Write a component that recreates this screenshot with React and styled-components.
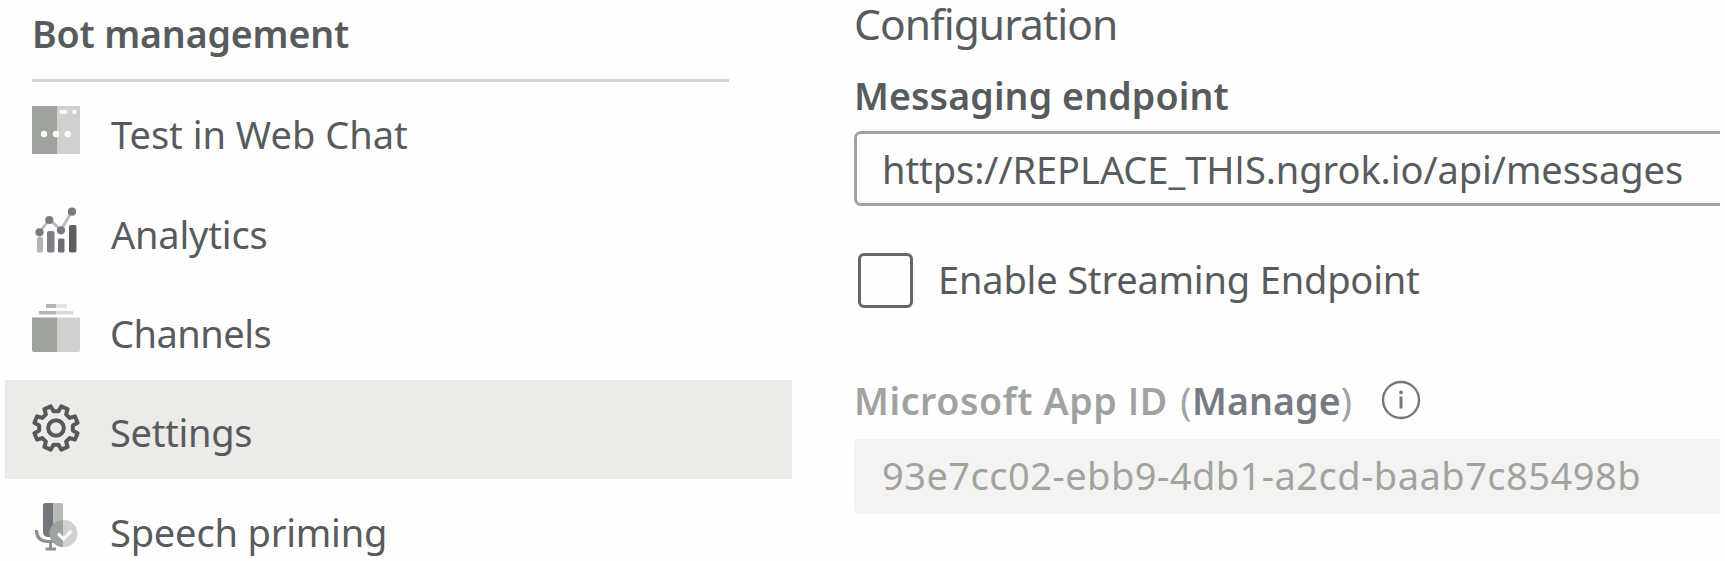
import React from 'react';
import styled, { createGlobalStyle } from 'styled-components';

const GlobalStyle = createGlobalStyle`
  * { box-sizing: border-box; }
  body {
    margin: 0;
    overflow: hidden;
    background: #fefefe;
    color: #575b5d;
    font-family: 'Noto Sans', 'Open Sans', sans-serif;
    font-size: 38px;
  }
`;

const Page = styled.div`
  display: flex;
  gap: 62px;
  width: 1725px;
  height: 561px;
  padding-left: 5px;
  overflow: hidden;
`;

const Sidebar = styled.nav`
  display: flex;
  flex-direction: column;
  flex: 0 0 787px;
`;

const GroupTitle = styled.h2`
  height: 82px;
  flex: none;
  margin: 0 63px 0 27px;
  padding-top: 6px;
  border-bottom: 3px solid #d2d3cf;
  font-size: 37.5px;
  font-weight: 600;
  line-height: 56px;
  letter-spacing: -0.15px;
`;

const NavList = styled.ul`
  margin: 0;
  padding: 0;
  list-style: none;
`;

const NavItem = styled.li`
  display: flex;
  align-items: center;
  height: 99.35px;
  padding-left: 27px;
  gap: 31px;
  background: ${(p) => (p.$selected ? '#ecebe8' : 'transparent')};
`;

const NavIcon = styled.svg`
  width: 48px;
  height: 48px;
  flex: none;
  margin-top: -4px;
`;

const NavLabel = styled.span`
  padding-top: 5px;
  line-height: 52px;
  letter-spacing: ${(p) => p.$tracking}px;
  margin-left: ${(p) => p.$shift || 0}px;
  white-space: nowrap;
`;

const Main = styled.main`
  display: flex;
  flex-direction: column;
  flex: 0 0 866px;
`;

const Heading = styled.h1`
  margin: 0;
  height: 48px;
  font-size: 42.5px;
  font-weight: 400;
  line-height: 48px;
  letter-spacing: -0.95px;
`;

const FieldLabel = styled.label`
  display: flex;
  align-items: center;
  height: ${(p) => p.$height}px;
  padding-top: ${(p) => p.$top}px;
  font-size: 37.5px;
  font-weight: 600;
  line-height: 52px;
  letter-spacing: ${(p) => p.$tracking}px;
  color: ${(p) => (p.$muted ? '#9fa39f' : 'inherit')};
  white-space: pre;
`;

const TextField = styled.div`
  display: flex;
  align-items: center;
  height: 75px;
  padding-left: 25px;
  border: 3px solid #a0a49e;
  border-right: 0;
  border-radius: 7px 0 0 7px;
  line-height: 52px;
  letter-spacing: -0.06px;
  white-space: nowrap;
`;

const DisabledField = styled(TextField)`
  padding: 0 0 4px 28px;
  border: 0;
  border-radius: 5px 0 0 5px;
  background: #f4f3f2;
  color: #a0a49f;
  letter-spacing: 0.48px;
`;

const CheckRow = styled.label`
  display: flex;
  align-items: center;
  gap: 25px;
  height: 55px;
  margin-top: 47px;
  padding-left: 4px;
  letter-spacing: -0.18px;
  white-space: nowrap;
`;

const CheckBox = styled.span`
  width: 55px;
  height: 55px;
  border: 3px solid #63676a;
  border-radius: 6px;
`;

const CheckLabel = styled.span`
  padding-bottom: 4px;
  line-height: 52px;
`;

const ManageLink = styled.a`
  color: #777a83;
  letter-spacing: 0.1px;
`;

const Paren = styled.span`
  font-weight: 400;
  margin-left: ${(p) => (p.$open ? 2 : 0)}px;
`;

/* The capital I without serif bars. */
const PlainI = styled.span`
  font-family: 'Open Sans', sans-serif;
`;

const InfoIcon = styled.svg`
  width: 40px;
  height: 40px;
  margin-left: 28px;
  margin-top: -2px;
`;

function gearPath(cx, cy, outer, root) {
  const pts = [];
  for (let i = 0; i < 8; i += 1) {
    const mid = 22.5 + i * 45;
    [[root, -14], [outer, -9], [outer, 9], [root, 14]].forEach(([r, d]) => {
      const a = ((mid + d) * Math.PI) / 180;
      pts.push(`${(cx + r * Math.sin(a)).toFixed(2)} ${(cy - r * Math.cos(a)).toFixed(2)}`);
    });
  }
  return `M${pts.join('L')}Z`;
}

const ChatIcon = () => (
  <NavIcon viewBox="0 0 48 48">
    <path d="M0 0h25v48H0z" fill="#9ea39d" />
    <path d="M25 0h23v48H25z" fill="#d0d1cf" />
    <rect x="27.5" y="4" width="8" height="4" rx="1.5" fill="#fafafa" />
    <rect x="40.5" y="4" width="4" height="4" rx="1" fill="#fafafa" />
    <g fill="#fdfdfd">
      <circle cx="12" cy="28" r="3.2" />
      <circle cx="24" cy="28" r="3.2" />
      <circle cx="35.7" cy="28" r="3.2" />
    </g>
  </NavIcon>
);

const AnalyticsIcon = () => (
  <NavIcon viewBox="0 0 48 48">
    <rect x="5" y="32" width="6" height="15.5" rx="1.5" fill="#b4b6b6" />
    <rect x="15" y="26" width="7.5" height="21.5" rx="2" fill="#7b7e86" />
    <rect x="26" y="33.5" width="6.5" height="14" rx="1.5" fill="#6b6e73" />
    <rect x="37" y="20" width="7.5" height="27.5" rx="2" fill="#5b5e61" />
    <path d="M7.5 27 17.5 14.5 29 25 40 6" fill="none" stroke="#b9bbbb" strokeWidth="2.8" />
    <g fill="#777a82">
      <circle cx="7.5" cy="27.3" r="4.1" />
      <circle cx="17.3" cy="15" r="4.1" />
      <circle cx="29" cy="25.3" r="4.1" />
      <circle cx="40" cy="6.7" r="4.1" />
    </g>
  </NavIcon>
);

const ChannelsIcon = () => (
  <NavIcon viewBox="0 0 48 48">
    <path d="M14 0h10v4H14z" fill="#b3b6b2" />
    <path d="M24 0h11v4H24z" fill="#e3e3e1" />
    <path d="M7 7h17v3.5H7z" fill="#b3b6b2" />
    <path d="M24 7h17v3.5H24z" fill="#d8d9d7" />
    <path d="M0 13.5h25V48H2a2 2 0 0 1-2-2z" fill="#9ea39d" />
    <path d="M25 13.5h23V46a2 2 0 0 1-2 2H25z" fill="#d0d1cf" />
  </NavIcon>
);

const GearIcon = () => (
  <NavIcon viewBox="0 0 48 48">
    <g fill="none" stroke="#55595a" strokeWidth="4" strokeLinejoin="round">
      <path d={gearPath(24, 24, 22.2, 17)} />
      <circle cx="24" cy="24" r="7.8" />
    </g>
  </NavIcon>
);

const SpeechIcon = () => (
  <NavIcon viewBox="0 0 48 48">
    <path d="M13 0h8v34h-6q-4-1-4-5V2a2 2 0 0 1 2-2z" fill="#73767e" />
    <path d="M21 0h8a2 2 0 0 1 2 2v32H21z" fill="#b9bbbb" />
    <path d="M4.5 27q0 11 11 11.5h6" fill="none" stroke="#8e9190" strokeWidth="3.2" />
    <path d="M18.5 39v6M13.5 46h10.5" fill="none" stroke="#8e9190" strokeWidth="3" />
    <circle cx="32" cy="30.5" r="13.5" fill="#d0d1cf" />
    <path d="M31 17a13.5 13.5 0 0 0 0 27z" fill="#9ea39d" />
    <path d="m26 30.5 5.5 5.5 8-8" fill="none" stroke="#f7f7f6" strokeWidth="3.2" />
  </NavIcon>
);

const navItems = [
  { label: 'Test in Web Chat', icon: ChatIcon, tracking: 0, shift: 0 },
  { label: 'Analytics', icon: AnalyticsIcon, tracking: -0.2, shift: 0 },
  { label: 'Channels', icon: ChannelsIcon, tracking: -0.5, shift: -1 },
  { label: 'Settings', icon: GearIcon, tracking: -0.3, shift: -1, selected: true },
  { label: 'Speech priming', icon: SpeechIcon, tracking: -0.18, shift: -1 },
];

export default function App() {
  return (
    <>
      <GlobalStyle />
      <Page>
        <Sidebar>
          <GroupTitle>Bot management</GroupTitle>
          <NavList>
            {navItems.map(({ label, icon: Icon, tracking, shift, selected }) => (
              <NavItem key={label} $selected={selected}>
                <Icon />
                <NavLabel $tracking={tracking} $shift={shift}>{label}</NavLabel>
              </NavItem>
            ))}
          </NavList>
        </Sidebar>
        <Main>
          <Heading>Configuration</Heading>
          <FieldLabel $height={83} $top={12} $tracking={0.12}>Messaging endpoint</FieldLabel>
          <TextField>
            <span>https://REPLACE_TH<PlainI>I</PlainI>S.ngrok.io/api/messages</span>
          </TextField>
          <CheckRow>
            <CheckBox />
            <CheckLabel>Enable Streaming Endpoint</CheckLabel>
          </CheckRow>
          <FieldLabel $height={131} $top={54} $tracking={0.6} $muted>
            <span>Microsoft App <PlainI>I</PlainI>D <Paren $open>(</Paren><ManageLink>Manage</ManageLink><Paren>)</Paren></span>
            <InfoIcon viewBox="0 0 40 40">
              <circle cx="20" cy="20" r="18" fill="none" stroke="#74787a" strokeWidth="2.4" />
              <path d="M20 16.5v12" stroke="#74787a" strokeWidth="3" />
              <circle cx="20" cy="12.3" r="1.9" fill="#74787a" />
            </InfoIcon>
          </FieldLabel>
          <DisabledField>93e7cc02-ebb9-4db1-a2cd-baab7c85498b</DisabledField>
        </Main>
      </Page>
    </>
  );
}
